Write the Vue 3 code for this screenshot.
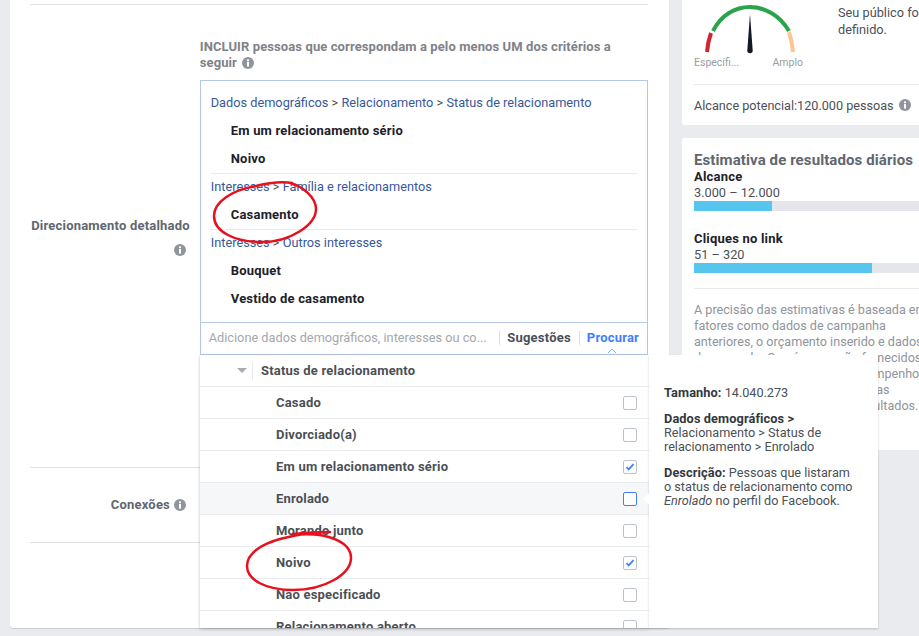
<script setup>
const groups = [
  { path: ['Dados demográficos', 'Relacionamento', 'Status de relacionamento'], items: ['Em um relacionamento sério', 'Noivo'] },
  { path: ['Interesses', 'Família e relacionamentos'], items: ['Casamento'] },
  { path: ['Interesses', 'Outros interesses'], items: ['Bouquet', 'Vestido de casamento'] }
]
const options = [
  { name: 'Casado' },
  { name: 'Divorciado(a)' },
  { name: 'Em um relacionamento sério', checked: true },
  { name: 'Enrolado', hover: true },
  { name: 'Morando junto' },
  { name: 'Noivo', checked: true },
  { name: 'Não especificado' },
  { name: 'Relacionamento aberto' }
]
const noteLines = [
  'A precisão das estimativas é baseada em',
  'fatores como dados de campanha',
  'anteriores, o orçamento inserido e dados',
  'de mercado. Os números são fornecidos',
  'para dar uma ideia de bom desempenho',
  'o esperado, mas não são garantias',
  'e nem são uma garantia dos resultados.'
]
</script>

<template>
  <div class="page">
    <svg class="defs" width="0" height="0">
      <symbol id="info" viewBox="0 0 12 12">
        <circle cx="6" cy="6" r="6" fill="#90949c" />
        <rect x="5" y="5" width="2" height="4.6" fill="#fff" />
        <rect x="5" y="2.4" width="2" height="1.8" fill="#fff" />
      </symbol>
    </svg>

    <main class="card">
      <section class="row detailed">
        <div class="label">
          <span>Direcionamento detalhado</span>
          <svg class="info"><use href="#info" /></svg>
        </div>
        <div class="field">
          <p class="include">
            INCLUIR pessoas que correspondam a pelo menos UM dos critérios a seguir
            <svg class="info inline"><use href="#info" /></svg>
          </p>
          <div class="box">
            <div class="group" v-for="g in groups" :key="g.path.join()">
              <div class="crumb">
                <template v-for="(p, i) in g.path" :key="p">
                  <span v-if="i" class="gt"> &gt; </span>{{ p }}
                </template>
              </div>
              <div class="item" v-for="it in g.items" :key="it">{{ it }}</div>
            </div>
          </div>
          <div class="search">
            <span class="placeholder">Adicione dados demográficos, interesses ou co...</span>
            <span class="tab first">Sugestões</span>
            <span class="tab active">Procurar
              <svg class="caret" width="10" height="5" viewBox="0 0 10 5"><path d="M1 5l4-4 4 4" fill="none" stroke="#86aef0" stroke-width="1" /></svg>
            </span>
          </div>
        </div>
      </section>
      <section class="row connections">
        <div class="conn-label">
          <span>Conexões</span>
          <svg class="info"><use href="#info" /></svg>
        </div>
      </section>

      <div class="overlay">
        <div class="list">
          <div class="list-head">
            <span class="tri"></span>
            <span class="list-title">Status de relacionamento</span>
          </div>
          <div class="opt" v-for="o in options" :key="o.name" :class="{ hover: o.hover }">
            <span>{{ o.name }}</span>
            <span class="check" :class="{ hovered: o.hover }">
              <svg v-if="o.checked" width="10" height="8" viewBox="0 0 10 8"><path d="M1.5 4.2l2.2 2.2L8.500 1.200" fill="none" stroke="#4080ff" stroke-width="1.7" /></svg>
            </span>
          </div>
        </div>
        <aside class="tip">
          <span class="tip-arrow"></span>
          <p><b>Tamanho:</b> 14.040.273</p>
          <p><b>Dados demográficos &gt;</b><br />Relacionamento &gt; Status de relacionamento &gt; Enrolado</p>
          <p><b>Descrição:</b> Pessoas que listaram o status de relacionamento como <i>Enrolado</i> no perfil do Facebook.</p>
        </aside>
      </div>

      <svg class="marks" width="400" height="636" viewBox="0 0 400 636">
        <path d="M290 183C302 186 316 197 316 209C316 225 290 242 262 242C235 242 214 232 214 216C214 202 232 190 256 186C268 183 280 181 292 183" />
        <path d="M330 532C316 532 303 533 293 534M300 534.500C328 533 351 542 351 558C351 574 325 590 293 590C266 590 247 580 247 566C247 553 262 544 280 539C288 537 296 535 304 534" />
      </svg>
    </main>

    <div class="side">
      <div class="panel audience">
        <div class="gauge-row">
          <div class="gauge">
            <svg width="100" height="56" viewBox="0 0 100 56">
              <path d="M13 52C13.500 46 14.500 40 17 33" stroke="#d1242f" />
              <path d="M19 31C35 -1 76 -1 95 31" stroke="#2ba24c" />
              <path d="M95 32C97 38 98.500 45 99 52" stroke="#fdc594" />
              <path d="M56 14L58.700 50.500A2.700 2.700 0 0 1 53.300 50.500Z" />
            </svg>
            <div class="gauge-labels"><span>Específi...</span><span>Amplo</span></div>
          </div>
          <p class="audience-text">Seu público foi bem definido.</p>
        </div>
        <div class="reach">
          Alcance potencial:120.000 pessoas
          <svg class="info"><use href="#info" /></svg>
        </div>
      </div>

      <div class="panel estimate">
        <h2>Estimativa de resultados diários</h2>
        <div class="metric">
          <b>Alcance</b>
          <span>3.000 – 12.000</span>
          <div class="bar"><div class="fill" :style="{ width: '78px' }"></div></div>
        </div>
        <div class="metric second">
          <b>Cliques no link</b>
          <span>51 – 320</span>
          <div class="bar"><div class="fill" :style="{ width: '178px' }"></div></div>
        </div>
        <div class="note"><div v-for="l in noteLines" :key="l">{{ l }}</div></div>
      </div>
    </div>
  </div>
</template>

<style>
html, body { margin: 0; background: #e9ebee; }
</style>

<style scoped>
.page {
  position: relative;
  display: flex;
  width: 919px;
  height: 636px;
  overflow: hidden;
  background: #e9ebee;
  font-family: "Roboto", "Liberation Sans", sans-serif;
  font-size: 12.75px;
  color: #4b4f56;
}
b, .item, .label, .include, .tab, .conn-label, .list-head, .opt {
  font-size: 13px;
  letter-spacing: .2px;
}
.defs { position: absolute; }
.info { width: 12px; height: 12px; flex: none; }

.card {
  position: relative;
  box-sizing: border-box;
  width: 659px;
  height: 628px;
  margin-left: 10px;
  padding: 4px 21px 0 20px;
  background: #fff;
  border-radius: 0 0 3px 3px;
  box-shadow: 0 1px 1px #c9ccd3;
}
.row { border-top: 1px solid #dddfe2; display: flex; }
.detailed { height: 462px; }
.connections { height: 74px; border-bottom: 1px solid #dddfe2; align-items: center; }

.label {
  box-sizing: border-box;
  width: 170px;
  padding: 213px 10px 0 0;
  text-align: right;
  font-weight: 700;
  line-height: 16px;
  color: #606770;
}
.label span { display: block; white-space: nowrap; }
.label .info { margin: 10px 4px 0 0; display: inline-block; }

.field { width: 449px; }
.include {
  margin: 0;
  padding-top: 34px;
  height: 41px;
  line-height: 16px;
  font-weight: 700;
  color: #7f8288;
  letter-spacing: .1px;
}
.info.inline { vertical-align: -2px; margin-left: 2px; }
.box {
  box-sizing: border-box;
  height: 242px;
  border: 1px solid #b5c7e8;
  border-bottom: 0;
  padding: 8px 10px 0;
}
.group + .group { border-top: 1px solid #e9ebee; }
.crumb { height: 28px; line-height: 28px; color: #365899; white-space: pre; }
.group + .group .crumb { height: 27px; line-height: 26px; }
.gt { color: #4b4f56; }
.item { height: 28px; line-height: 28px; padding-left: 20px; font-weight: 700; color: #1d2129; }
.search {
  box-sizing: border-box;
  position: relative;
  display: flex;
  align-items: center;
  height: 33px;
  border: 1px solid #b5c7e8;
  padding: 0 8px 2px 8px;
}
.placeholder { flex: 1; color: #a4a7ad; white-space: nowrap; }
.tab { font-weight: 700; color: #4b4f56; line-height: 14px; padding: 0 8px 0 7px; border-left: 1px solid #dddfe2; }
.tab.active { color: #4080ff; padding-right: 0; position: relative; }
.caret { position: absolute; left: 27px; top: 17px; }

.conn-label {
  display: flex;
  align-items: center;
  justify-content: flex-end;
  gap: 4px;
  width: 156px;
  font-weight: 700;
  padding-bottom: 1px;
  color: #606770;
}

.overlay {
  position: absolute;
  left: 190px;
  top: 355px;
  display: flex;
  height: 273px;
}
.list {
  width: 449px;
  height: 273px;
  overflow: hidden;
  background: #fff;
  box-shadow: 0 1px 3px rgba(0, 0, 0, .25);
}
.list-head {
  display: flex;
  align-items: center;
  box-sizing: border-box;
  height: 32px;
  border-bottom: 1px solid #e9ebee;
  padding-left: 37px;
  font-weight: 700;
}
.tri {
  width: 0;
  height: 0;
  border: 5px solid transparent;
  border-top: 5px solid #a9acb3;
  border-bottom: 0;
  margin-right: 5px;
}
.list-title { padding: 2px 0 2px 8px; border-left: 1px solid #e9ebee; line-height: 14px; }
.opt {
  box-sizing: border-box;
  display: flex;
  align-items: center;
  justify-content: space-between;
  height: 32px;
  border-bottom: 1px solid #e9ebee;
  padding: 0 12px 0 76px;
  font-weight: 700;
}
.opt.hover { background: #f6f7f9; }
.check {
  box-sizing: border-box;
  display: flex;
  align-items: center;
  justify-content: center;
  width: 14px;
  height: 14px;
  background: #fff;
  border: 1px solid #bec2c9;
  border-radius: 2px;
}
.check.hovered { border-color: #4080ff; }
.tip {
  position: relative;
  box-sizing: border-box;
  width: 229px;
  height: 273px;
  padding: 31px 24px 0 15px;
  background: #fff;
  box-shadow: 0 1px 2px rgba(0, 0, 0, .2);
  line-height: 14px;
  font-size: 12.65px;
}
.tip p { margin: 0 0 12px; }
.tip b { color: #333740; font-size: 12.75px; letter-spacing: .1px; }
.tip-arrow {
  position: absolute;
  left: -4px;
  top: 140px;
  width: 8px;
  height: 8px;
  background: #fff;
  transform: rotate(45deg);
}

.marks {
  position: absolute;
  left: -10px;
  top: 0;
  fill: none;
  stroke: #e8101c;
  stroke-width: 2.5;
  stroke-linecap: round;
  pointer-events: none;
  overflow: visible;
}

.side { margin-left: 13px; width: 300px; flex: none; }
.panel { box-sizing: border-box; background: #fff; border-radius: 2px; padding: 0 12px; }
.audience { height: 125px; }
.gauge-row { display: flex; height: 84px; border-bottom: 1px solid #e9ebee; }
.gauge { width: 144px; flex: none; }
.gauge svg { display: block; overflow: visible; }
.gauge path { fill: none; stroke-width: 4; }
.gauge path:last-child { stroke: none; fill: #141823; }
.gauge-labels { display: flex; width: 109px; justify-content: space-between; font-size: 10.5px; color: #9a9da3; }
.audience-text { margin: 4px 0 0; width: 130px; line-height: 17px; flex: none; }
.reach { display: flex; align-items: center; gap: 5px; height: 40px; font-size: 12.65px; white-space: nowrap; }

.estimate { margin-top: 13px; height: 312px; padding-top: 14px; }
.estimate h2 { margin: 0; font-size: 15px; line-height: 17px; font-weight: 700; color: #606770; white-space: nowrap; letter-spacing: .1px; }
.metric { display: flex; flex-direction: column; line-height: 16px; }
.metric b { color: #1d2129; }
.metric.second { margin-top: 20px; }
.bar { height: 10px; background: #e4e6eb; width: 288px; }
.fill { height: 100%; background: #56c6ee; }
.note {
  margin: 15px 0 0;
  padding-top: 13px;
  border-top: 1px solid #e9ebee;
  color: #90949c;
  font-size: 12.6px;
  line-height: 16px;
  white-space: nowrap;
}
</style>
